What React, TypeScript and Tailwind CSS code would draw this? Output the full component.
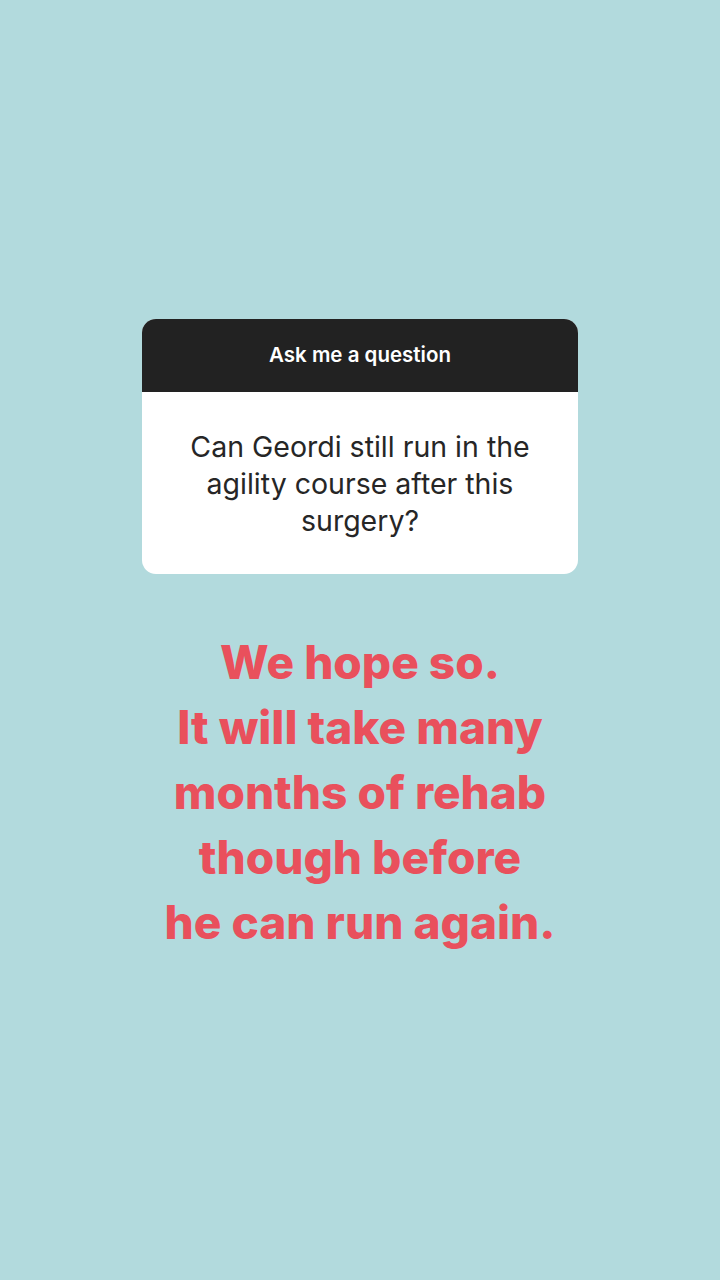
export default function App() {
  return (
    <div
      className="flex flex-col items-center w-[720px] h-[1280px] bg-[#b2dadd] pt-[319px]"
      style={{ fontFamily: "Inter, 'Noto Sans', sans-serif" }}
    >
      <div className="w-[436px] rounded-[14px] overflow-hidden bg-white">
        <div className="h-[73px] flex items-center justify-center bg-[#222222]">
          <span className="text-white text-[20.5px] font-semibold">Ask me a question</span>
        </div>
        <div className="h-[182px] flex items-center justify-center px-5">
          <p className="text-[#262626] text-[28.5px] leading-[37px] text-center">
            Can Geordi still run in the agility course after this surgery?
          </p>
        </div>
      </div>
      <div className="mt-[56px] text-[#e9505c] text-[46px] leading-[65px] font-extrabold text-center">
        <p>We hope so.</p>
        <p>It will take many</p>
        <p>months of rehab</p>
        <p>though before</p>
        <p>he can run again.</p>
      </div>
    </div>
  );
}
